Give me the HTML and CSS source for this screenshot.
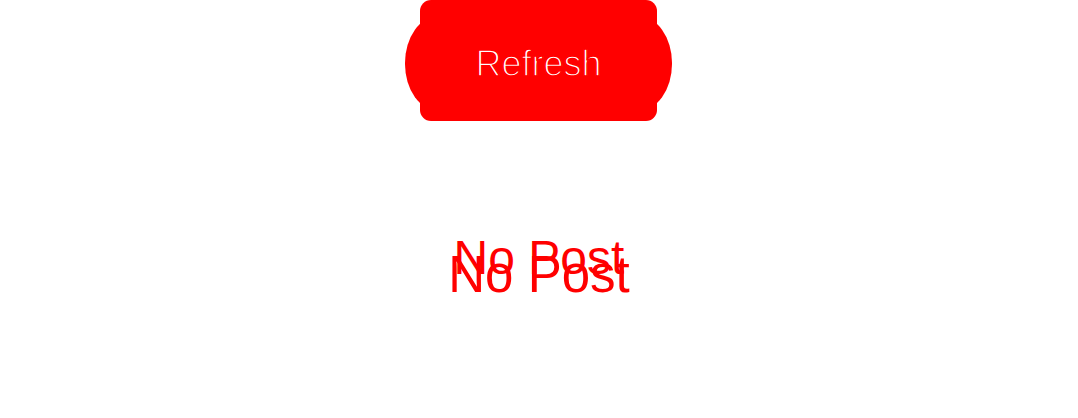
FILE: index.html
```html
<!DOCTYPE html>
<html>
<head>
<meta charset="utf-8">
<link rel="stylesheet" href="styles.css">
</head>
<body>
<div class="page">
  <div class="btn-wrap">
    <button class="refresh">Refresh</button>
  </div>
  <div class="empty">
    <span class="msg msg-a">No Post</span>
    <span class="msg msg-b">No Post</span>
  </div>
</div>
</body>
</html>
```
FILE: styles.css
```css
html, body {
  margin: 0;
  padding: 0;
  background: #ffffff;
}
.page {
  width: 1078px;
  height: 418px;
  display: flex;
  flex-direction: column;
  align-items: center;
  font-family: "Liberation Sans", Arial, sans-serif;
}
.btn-wrap {
  position: relative;
  width: 237px;
  height: 121px;
  margin-left: -1px;
}
.btn-wrap::before {
  content: "";
  position: absolute;
  left: -15px;
  right: -15px;
  top: 16px;
  bottom: 10px;
  background: #ff0000;
  border-radius: 34px / 47px;
}
.refresh {
  position: relative;
  width: 237px;
  height: 121px;
  border: none;
  border-radius: 11px;
  background: #ff0000;
  color: #ffffff;
  font-family: "Liberation Sans", Arial, sans-serif;
  font-size: 36px;
  padding: 6px 0 0;
  -webkit-text-stroke: 1.5px #ff0000;
  line-height: 1;
}
.empty {
  display: grid;
  margin-top: 113px;
}
.msg {
  grid-area: 1 / 1;
  justify-self: center;
  color: #ff0000;
  line-height: 1;
}
.msg-a {
  font-size: 48px;
}
.msg-b {
  font-size: 51px;
  margin-top: 15px;
}
```
